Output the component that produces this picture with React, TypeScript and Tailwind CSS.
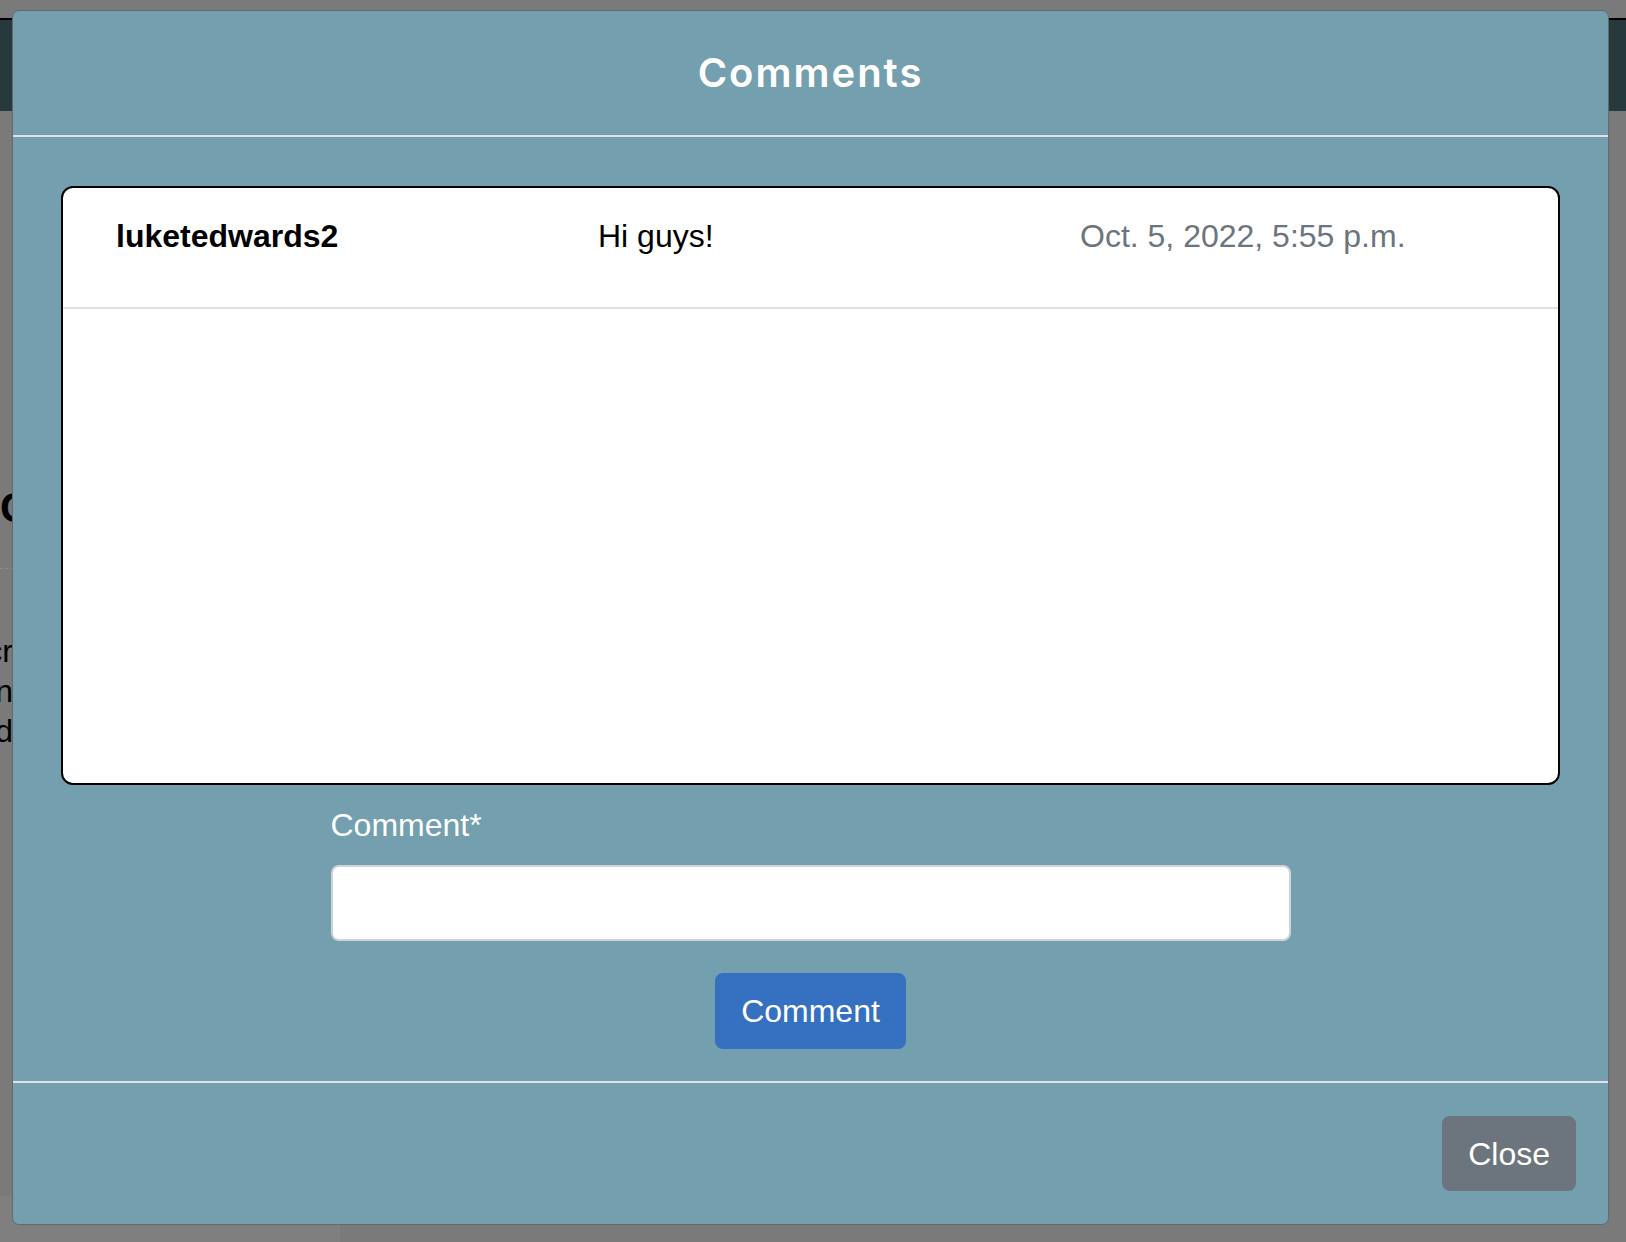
import React from "react";

export default function App() {
  return (
    <div className="relative w-[1626px] h-[1242px] overflow-hidden bg-[#7a7a7a] font-['Liberation_Sans',Arial,sans-serif]">
      {/* dimmed page behind the modal */}
      <div className="pt-[18px]">
        <div className="h-[93px] bg-[#263a3e] border-t-2 border-black" />
        <div className="mt-[372px] text-[42px] leading-[50px] font-bold text-black whitespace-nowrap">C</div>
        <div className="mt-[35px] w-[40px] border-t border-dashed border-[#8e8e8e]" />
        <div className="mt-[62px] w-[13px] flex flex-col items-end text-[32px] leading-[40px] text-black whitespace-nowrap">
          <span>Descr</span>
          <span>Design</span>
          <span>Rated</span>
        </div>
        <div className="mt-[445px] w-[340px] h-[200px] bg-[#7f7f7f] pt-[44px] pl-[45px] text-[30px] leading-[40px] text-[#5e5e5e] whitespace-nowrap">
          Oct. 5, 2022, 5:54 p.m.
        </div>
      </div>

      {/* modal */}
      <div className="absolute left-[12px] top-[10px] w-[1597px] h-[1215px] flex flex-col bg-[#739fae] border border-[#616b6f] rounded-[7px]">
        <div className="h-[126px] shrink-0 flex items-center justify-center border-b-2 border-[#dfe3e7]">
          <h1 className="font-['Inter',sans-serif] font-semibold text-[40px] leading-[60px] tracking-[2px] text-white">
            Comments
          </h1>
        </div>

        <div className="h-[944px] shrink-0 px-[48px] pt-[49px]">
          <div className="h-[599px] bg-white border-2 border-black rounded-[12px] overflow-hidden">
            <div className="h-[121px] border-b-2 border-[#dee2e6] pt-[24px] pl-[53px] grid grid-cols-[482px_482px_1fr] text-[32px] leading-[48px]">
              <span className="font-bold text-black">luketedwards2</span>
              <span className="text-black">Hi guys!</span>
              <span className="text-[#6c757d]">Oct. 5, 2022, 5:55 p.m.</span>
            </div>
          </div>

          <div className="w-[960px] mx-auto mt-[16px] flex flex-col">
            <label className="text-[32px] leading-[48px] text-white">Comment*</label>
            <input
              type="text"
              className="mt-[16px] h-[76px] w-full bg-white border-2 border-[#ced4da] rounded-[8px] px-[24px] text-[32px] outline-none"
            />
            <div className="mt-[32px] flex justify-center">
              <button className="h-[76px] px-[24px] bg-[#3570c1] border-2 border-[#3570c1] rounded-[8px] text-white text-[32px] leading-[48px]">
                Comment
              </button>
            </div>
          </div>
        </div>

        <div className="flex-1 border-t-2 border-[#dfe3e7] flex justify-end items-start pt-[33px] pr-[32px]">
          <button className="h-[75px] px-[24px] bg-[#6c757d] border-2 border-[#6c757d] rounded-[8px] text-white text-[32px] leading-[48px]">
            Close
          </button>
        </div>
      </div>
    </div>
  );
}
